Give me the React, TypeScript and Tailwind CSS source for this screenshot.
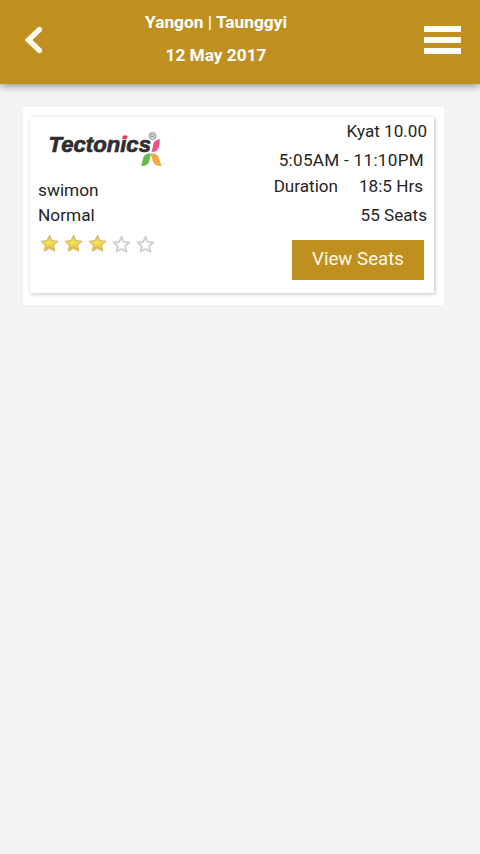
const STAR = "M12 1.8l3.1 6.7 7.3.8-5.4 5 1.5 7.2-6.5-3.6-6.5 3.6L7 14.300 1.600 9.300l7.300-.8z";

function Star({ filled }: { filled: boolean }) {
  return (
    <svg viewBox="0 0 24 24" className={filled ? "h-[19px] w-[19px] shrink-0" : "mt-px h-[19px] w-[19px] shrink-0"}>
      <defs>
        <linearGradient id="gold" x1="0" y1="0" x2="0" y2="1">
          <stop offset="0" stopColor="#c9d060" />
          <stop offset="0.450" stopColor="#f8e04e" />
          <stop offset="1" stopColor="#dfac35" />
        </linearGradient>
      </defs>
      <path
        d={STAR}
        fill={filled ? "url(#gold)" : "#e6e6e6"}
        stroke={filled ? "#d0c070" : "#cacaca"}
        strokeWidth="1.6"
        strokeLinejoin="round"
      />
      {!filled && <path d="M12 6.500l1.700 4 4.200.500-3 2.800.800 4L12 15.700 8.300 17.800l.800-4-3-2.800 4.200-.500z" fill="#fff" />}
    </svg>
  );
}

function Logo() {
  return (
    <svg viewBox="0 0 116 40" className="ml-[9px] h-10 w-[116px]" aria-label="Tectonics">
      <text
        x="1.500"
        y="25.300"
        textLength="102.500"
        lengthAdjust="spacingAndGlyphs"
        fontFamily="'Liberation Sans', Arial, sans-serif"
        fontSize="22"
        fontWeight="700"
        fontStyle="italic"
        fill="#302e31"
        stroke="#302e31"
        strokeWidth="0.7"
      >
        Tectonics
      </text>
      <path d="M75.800 8.700h4.600l-.6 3.300h-4.600z" fill="#dc3f68" />
      <circle cx="105.500" cy="9" r="3.600" fill="#e4e4e4" stroke="#999" strokeWidth="1" />
      <text x="103.300" y="11.200" fontFamily="'Liberation Sans', Arial, sans-serif" fontSize="6" fill="#777">R</text>
      <path d="M113 12c-3.500 1-6.500 2.500-6.500 5l-2 8c4.500-.3 7-2.500 7.500-5.500z" fill="#e8508e" />
      <path d="M104 26.500c-5-.3-7 1.500-7.800 4.500l-2 8c4.500.2 7.300-1.500 8-4.500z" fill="#65bc48" />
      <path d="M103.500 26.500c4-.3 6.500.5 8 3.500l3 9c-4.500 0-7.500-1.500-8.500-4.500z" fill="#f5a840" />
    </svg>
  );
}

export default function App() {
  return (
    <div className="h-[854px] w-[480px] overflow-hidden bg-[#f3f3f3] font-['Roboto',sans-serif] text-[#242424]">
      <header className="flex h-[84px] items-start bg-[#bf8f1f] text-white shadow-[0_1px_8px_rgba(0,0,0,0.5)]">
        <button aria-label="Back" className="ml-6 mt-[26px] h-7 w-[19px]">
          <svg viewBox="0 0 19 28" className="h-7 w-[19px]" fill="none" stroke="#fffaf0" strokeWidth="5.400" strokeLinecap="round">
            <path d="M15.500 3.500 4.500 14l11 10.500" strokeLinejoin="miter" />
          </svg>
        </button>
        <div className="ml-[73px] mt-[5.500px] w-[200px] text-center text-[17.300px] font-bold leading-[33.500px]">
          <div>Yangon | Taunggyi</div>
          <div>12 May 2017</div>
        </div>
        <button aria-label="Menu" className="ml-[108px] mt-[26px] flex w-[37px] flex-col gap-[5px]">
          <span className="h-1.5 w-full bg-[#fffdf6]" />
          <span className="h-[6px] w-full bg-[#fffdf6]" />
          <span className="h-1.5 w-full bg-[#fffdf6]" />
        </button>
      </header>
      <main className="ml-[23px] mt-[23px] h-[198px] w-[421px] bg-white px-[7px] pt-2.5">
        <article className="flex h-[176px] w-[404px] justify-between bg-white pl-2 shadow-[1px_1px_4px_rgba(0,0,0,0.24)]">
          <section className="flex flex-col text-[17.300px]">
            <div className="mt-[10px]"><Logo /></div>
            <div className="mt-[10.500px] h-[25px] leading-[25px]">swimon</div>
            <div className="h-[26px] leading-[25px]">Normal</div>
            <div className="ml-[1.500px] mt-[5px] flex gap-[5px]">
              {[1, 2, 3, 4, 5].map((n) => <Star key={n} filled={n <= 3} />)}
            </div>
          </section>
          <section className="flex w-[170px] flex-col items-end pr-[7px] text-[17.100px]">
            <div className="h-7 leading-7">Kyat 10.00</div>
            <div className="mr-[3px] mt-px h-[29px] whitespace-nowrap leading-[29px] tracking-[0.300px]">5:05AM - 11:10PM</div>
            <div className="mr-1 flex h-[24px] gap-[21px] whitespace-nowrap leading-[23px]">
              <span>Duration</span>
              <span>18:5 Hrs</span>
            </div>
            <div className="mt-[1px] h-[30px] leading-[30px]">55 Seats</div>
            <button className="mr-[3px] mt-[10px] h-10 w-[132px] shrink-0 bg-[#bf8f1f] pb-px text-[18.700px] text-[#fff9e7]">
              View Seats
            </button>
          </section>
        </article>
      </main>
    </div>
  );
}
